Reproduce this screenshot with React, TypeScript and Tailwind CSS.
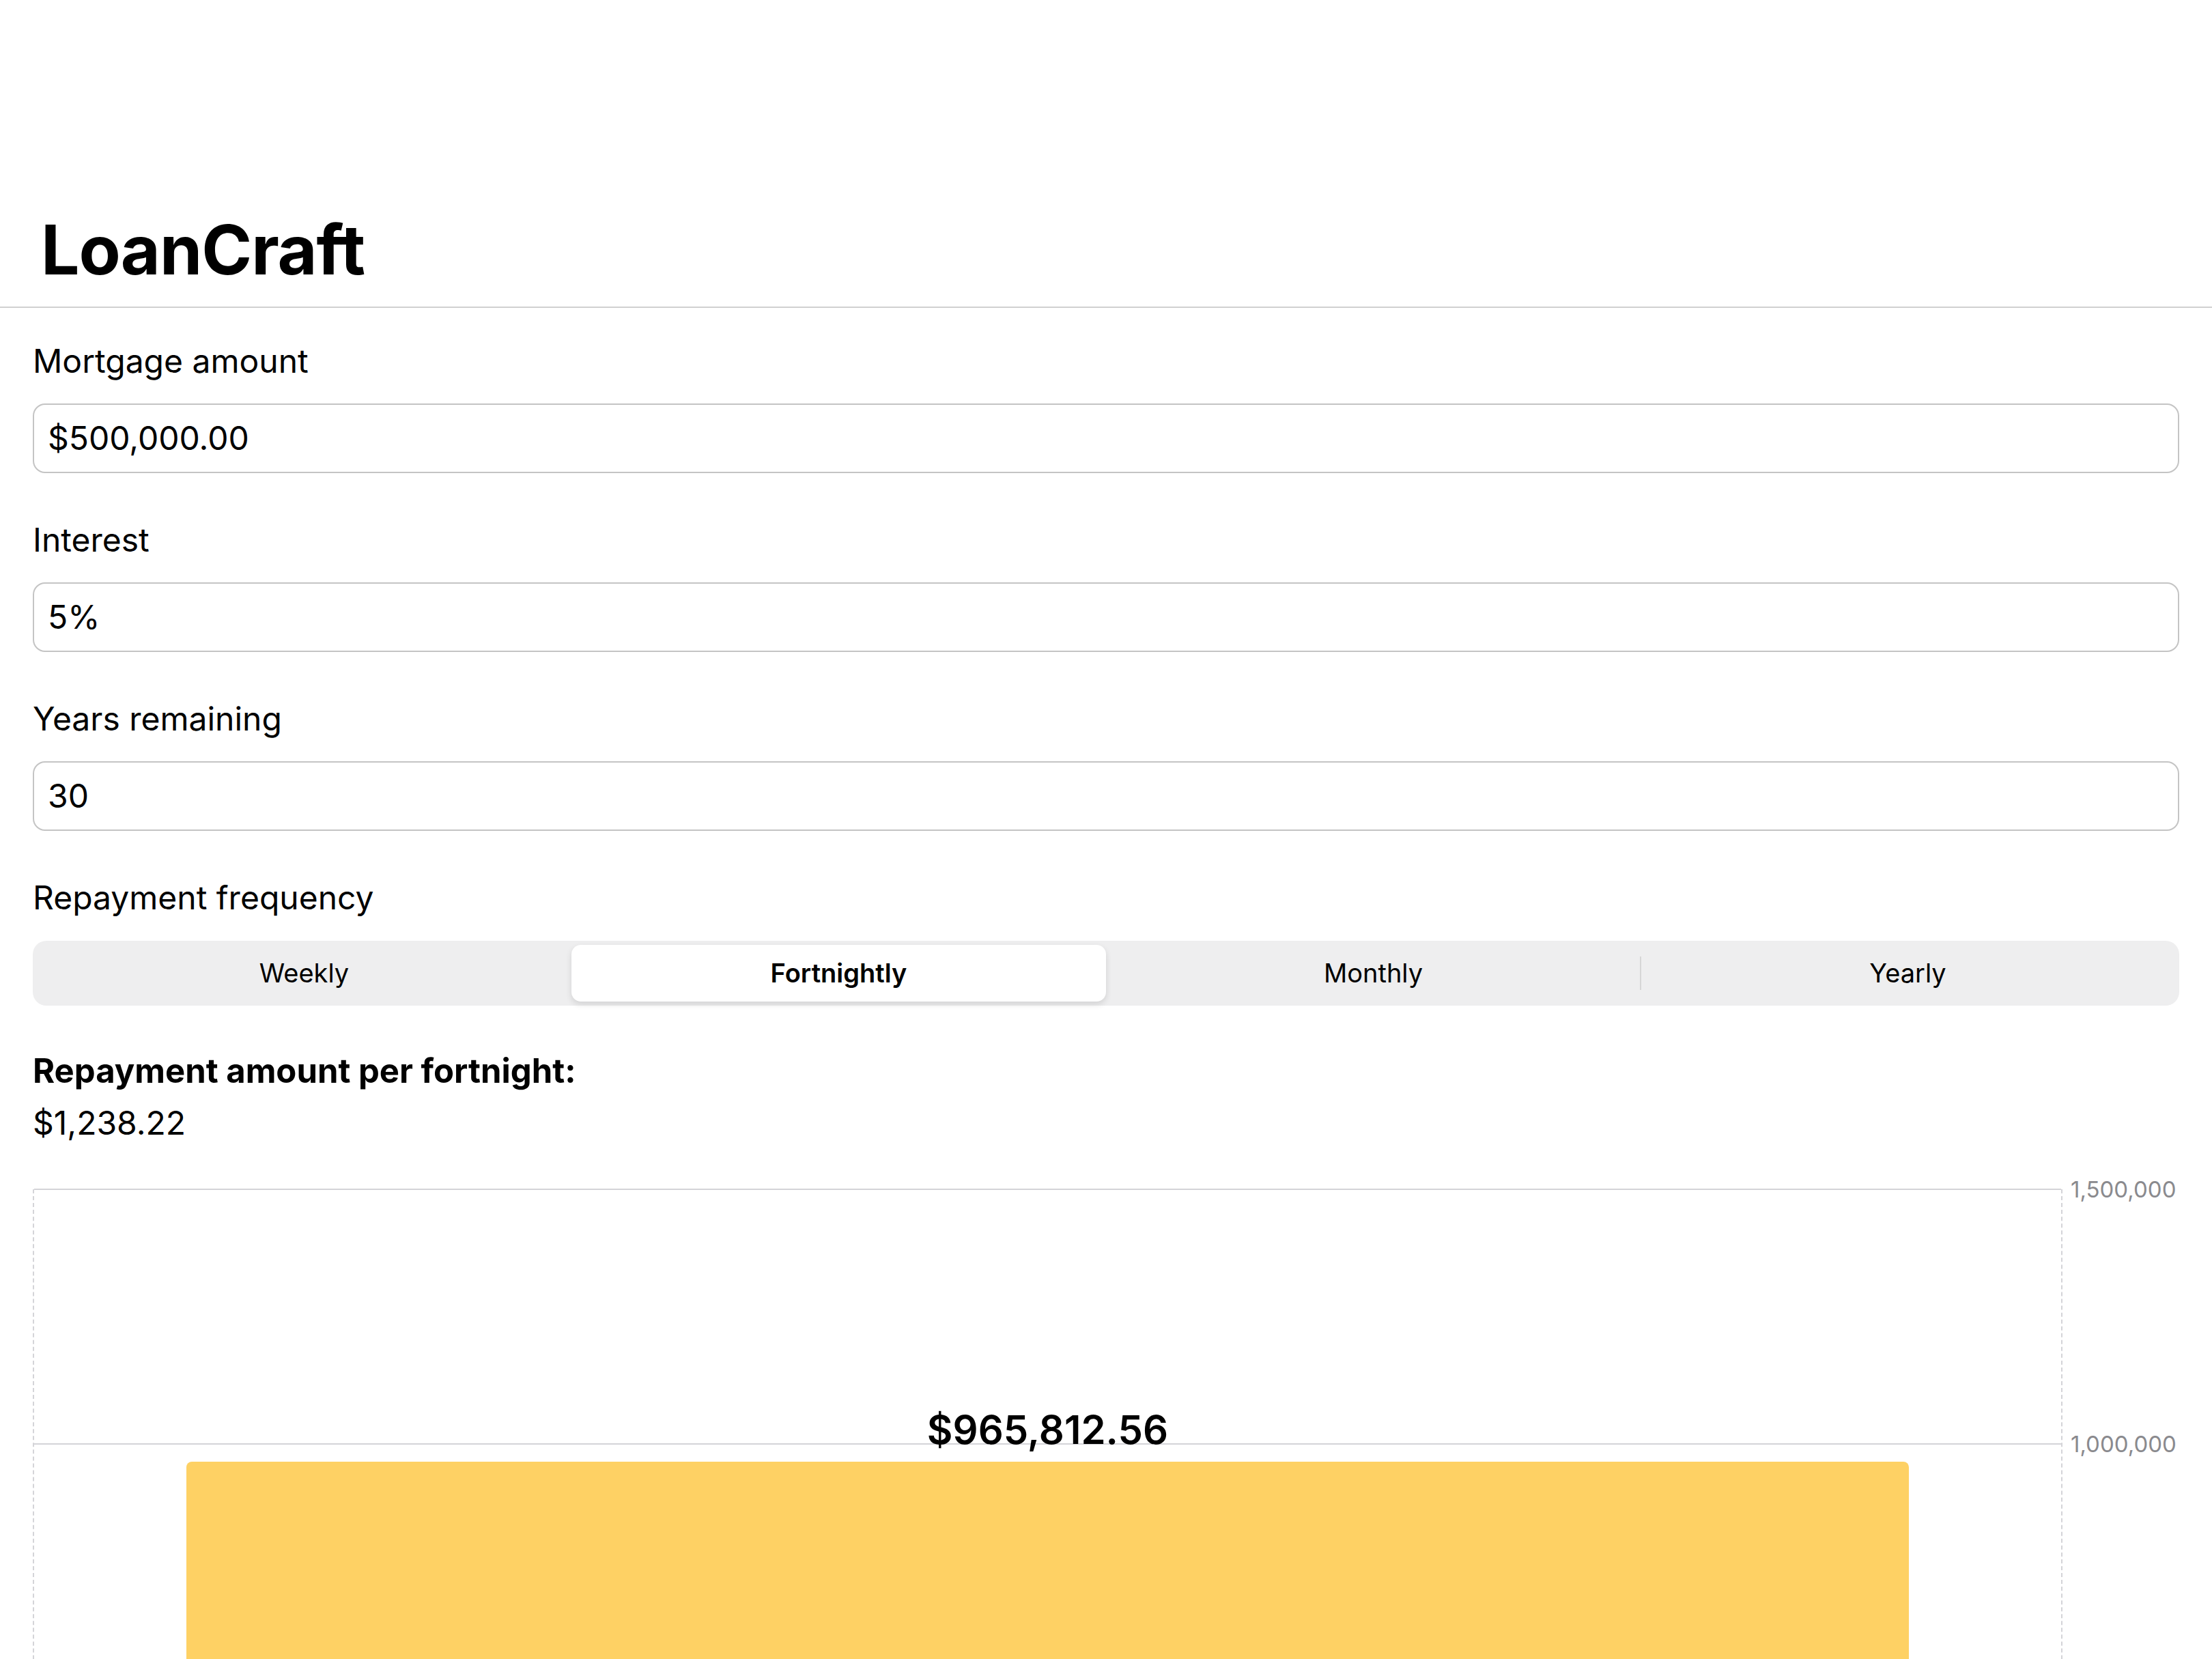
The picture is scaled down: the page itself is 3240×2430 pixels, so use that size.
import { useState } from "react";

const frequencies = ["Weekly", "Fortnightly", "Monthly", "Yearly"];

const fields = [
  { label: "Mortgage amount", value: "$500,000.00" },
  { label: "Interest", value: "5%" },
  { label: "Years remaining", value: "30" },
];

const total = 965812.56;
const maxValue = 1500000;
const ticks = [1500000, 1000000, 500000, 0];
const plotHeight = 1120;

const Field = ({ label, value }: { label: string; value: string }) => (
  <div className="flex flex-col gap-[33px]">
    <div className="text-[48px] leading-[58px] text-black">{label}</div>
    <div className="flex h-[102px] items-center rounded-[18px] border-2 border-[#c4c4c4] pl-[20px] text-[48px] text-black">
      {value}
    </div>
  </div>
);

const Chart = () => {
  const barHeight = (total / maxValue) * plotHeight;
  return (
    <div className="flex h-[1200px]">
      <div className="relative h-[1120px] flex-1 border-x-2 border-dashed border-[#d4d4d8]">
        {ticks.map((t) => (
          <div
            key={t}
            className="absolute left-0 right-0 h-[2px] bg-[#d4d4d8]"
            style={{ top: plotHeight - (t / maxValue) * plotHeight - 1 }}
          />
        ))}
        <div className="relative flex h-full flex-col items-center justify-end gap-[18px] px-[7.5%]">
          <div className="text-[58px] font-semibold leading-[58px] text-black">$965,812.56</div>
          <div className="w-full rounded-t-[8px] bg-[#fed164]" style={{ height: barHeight }} />
        </div>
      </div>
      <div className="-mt-[20px] flex w-[171px] flex-col pl-[12px]">
        {ticks.map((t) => (
          <div key={t} className="h-[373.33px] shrink-0 text-[33px] leading-[40px] text-[#8a8a8e]">
            {t.toLocaleString("en-US")}
          </div>
        ))}
      </div>
    </div>
  );
};

export default function App() {
  const [selected, setSelected] = useState("Fortnightly");

  return (
    <div className="min-h-screen bg-white font-['Inter','Noto_Sans',sans-serif] text-black">
      <header className="border-b-2 border-[#d0d0d0] pb-[33px] pl-[60px] pt-[316px]">
        <h1 className="text-[100px] font-bold leading-[100px] tracking-[-1px]">LoanCraft</h1>
      </header>

      <main className="flex flex-col px-[48px] pt-[49px]">
        <div className="flex flex-col gap-[69px]">
          {fields.map((f) => (
            <Field key={f.label} label={f.label} value={f.value} />
          ))}

          <div className="flex flex-col gap-[34px]">
            <div className="text-[48px] leading-[58px]">Repayment frequency</div>
            <div className="flex h-[95px] items-stretch rounded-[20px] bg-[#eeeeef] p-[6px]">
              {frequencies.map((f, i) => {
                const active = f === selected;
                const showDivider = i > 0 && !active && frequencies[i - 1] !== selected;
                return (
                  <div key={f} className="relative flex flex-1 items-center">
                    {showDivider && (
                      <span className="absolute left-[-1px] top-[17px] h-[49px] w-[2px] bg-[#d6d6d6]" />
                    )}
                    <button
                      onClick={() => setSelected(f)}
                      className={
                        active
                          ? "h-full w-full rounded-[14px] bg-white text-[38px] font-semibold shadow-[0_4px_10px_rgba(0,0,0,0.12)]"
                          : "h-full w-full text-[38px] font-normal"
                      }
                    >
                      {f}
                    </button>
                  </div>
                );
              })}
            </div>
          </div>
        </div>

        <div className="mt-[67px] flex flex-col gap-[18px]">
          <div className="text-[49px] font-bold leading-[58px]">Repayment amount per fortnight:</div>
          <div className="text-[48px] leading-[58px]">$1,238.22</div>
        </div>

        <div className="mt-[68px]">
          <Chart />
        </div>
      </main>
    </div>
  );
}
